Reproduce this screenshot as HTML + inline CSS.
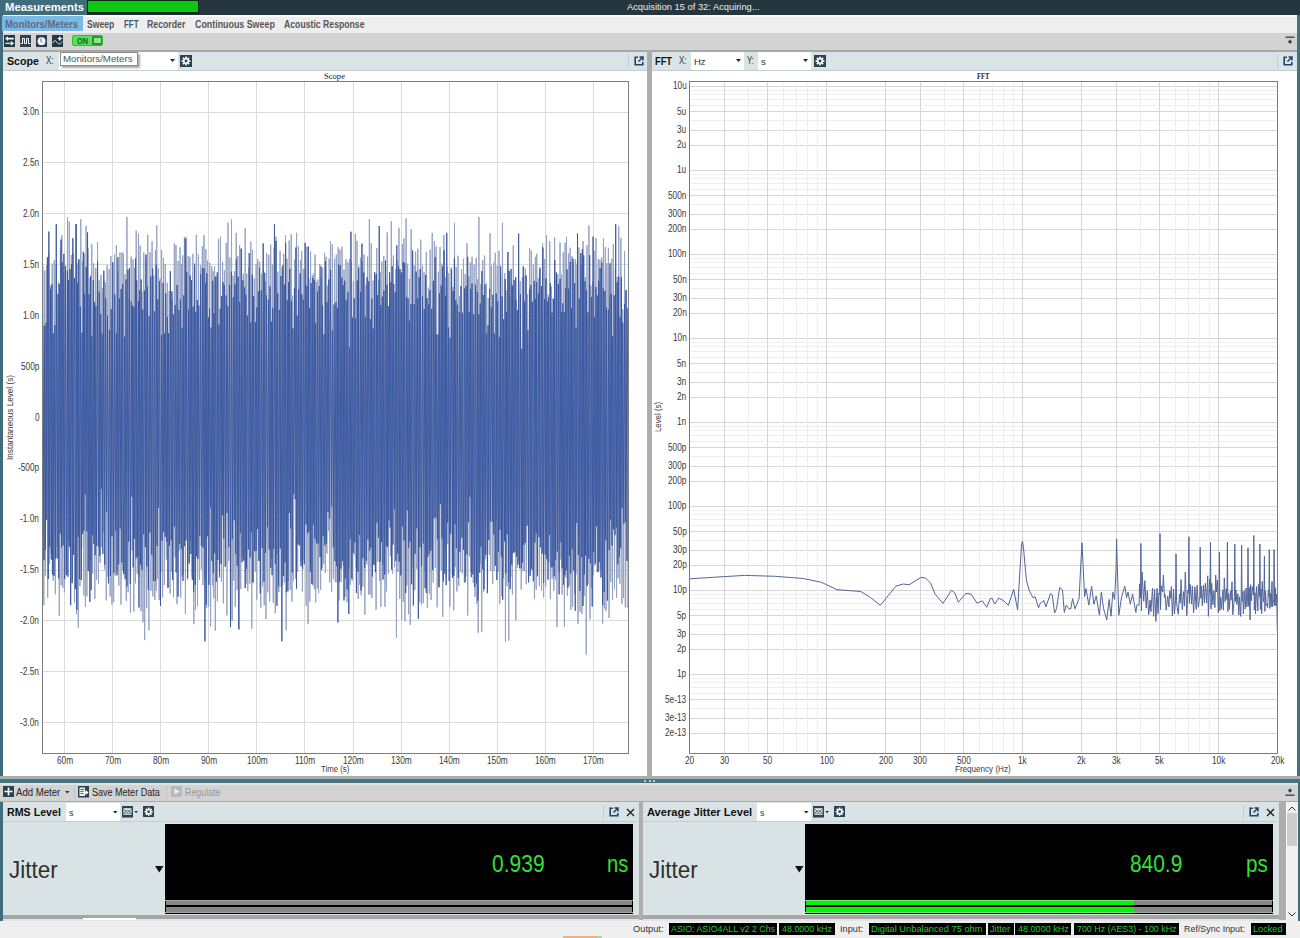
<!DOCTYPE html><html><head><meta charset="utf-8"><title>Measurements</title><style>
*{margin:0;padding:0;box-sizing:border-box}
html,body{width:1300px;height:938px;overflow:hidden;background:#efefef;font-family:"Liberation Sans",sans-serif;}
.a{position:absolute}
.t{position:absolute;white-space:nowrap;line-height:1}
</style></head><body>
<div class="a" style="left:0px;top:0px;width:1300px;height:15px;background:#25363f"></div>
<div class="a" style="left:0px;top:0px;width:87px;height:15px;background:#3f6d7b"></div>
<div class="t" style="left:5.00px;top:2.00px;font-size:11.5px;font-family:'Liberation Sans',sans-serif;font-weight:bold;color:#fff;transform:scaleX(0.9809);transform-origin:0 0;">Measurements</div>
<div class="a" style="left:87px;top:0px;width:112px;height:14px;background:#0b2a14"></div>
<div class="a" style="left:88px;top:1px;width:110px;height:11px;background:#0cc80f"></div>
<div class="t" style="left:627.00px;top:2.00px;font-size:9.5px;font-family:'Liberation Sans',sans-serif;font-weight:normal;color:#e8eef0;transform:scaleX(0.9801);transform-origin:0 0;">Acquisition 15 of 32: Acquiring...</div>
<div class="a" style="left:0px;top:15px;width:2.5px;height:906px;background:#3f6d7b"></div>
<div class="a" style="left:2.5px;top:15px;width:1px;height:906px;background:#8fa3a9"></div>
<div class="a" style="left:1297px;top:15px;width:3px;height:768px;background:#46717e"></div>
<div class="a" style="left:3px;top:15px;width:1294px;height:18px;background:#efeeee"></div>
<div class="a" style="left:3px;top:15px;width:1294px;height:1.5px;background:#fafafa"></div>
<div class="a" style="left:2px;top:15.5px;width:81px;height:15.5px;background:#7cb8e4"></div>
<div class="t" style="left:5.00px;top:20.00px;font-size:10.2px;font-family:'Liberation Sans',sans-serif;font-weight:bold;color:#5d6c7c;transform:scaleX(0.9267);transform-origin:0 0;">Monitors/Meters</div>
<div class="t" style="left:87.20px;top:20.00px;font-size:10.2px;font-family:'Liberation Sans',sans-serif;font-weight:bold;color:#555;transform:scaleX(0.8448);transform-origin:0 0;">Sweep</div>
<div class="t" style="left:123.90px;top:20.00px;font-size:10.2px;font-family:'Liberation Sans',sans-serif;font-weight:bold;color:#3f5d6d;transform:scaleX(0.7811);transform-origin:0 0;">FFT</div>
<div class="t" style="left:147.40px;top:20.00px;font-size:10.2px;font-family:'Liberation Sans',sans-serif;font-weight:bold;color:#555;transform:scaleX(0.8574);transform-origin:0 0;">Recorder</div>
<div class="t" style="left:194.80px;top:20.00px;font-size:10.2px;font-family:'Liberation Sans',sans-serif;font-weight:bold;color:#555;transform:scaleX(0.8703);transform-origin:0 0;">Continuous Sweep</div>
<div class="t" style="left:283.90px;top:20.00px;font-size:10.2px;font-family:'Liberation Sans',sans-serif;font-weight:bold;color:#555;transform:scaleX(0.8515);transform-origin:0 0;">Acoustic Response</div>
<div class="a" style="left:3px;top:33px;width:1294px;height:17px;background:#d3d3d3"></div>
<div class="a" style="left:3px;top:50px;width:1294px;height:2px;background:#a7a7a7"></div>
<svg class="a" style="left:4px;top:35px" width="11" height="12" viewBox="0 0 11 12"><rect width="11" height="12" fill="#1f3a44"/><path d="M1 3.6L4 1.2V6z" fill="#fff"/><rect x="3.6" y="2.8" width="6.2" height="1.7" fill="#fff"/><rect x="1.4" y="7.6" width="5.4" height="1.5" fill="#cfd8dc"/><path d="M10.2 8.35L6.8 6v4.7z" fill="#e8eef0"/></svg>
<svg class="a" style="left:20px;top:35px" width="11" height="12" viewBox="0 0 11 12"><rect width="11" height="12" fill="#2d4250"/><path d="M0.5 8.5H2.5V3.5H4.5V8.5H6.5V3.5H8.5V8.5H10.5" stroke="#fff" stroke-width="1" fill="none" stroke-linejoin="miter"/></svg>
<svg class="a" style="left:36px;top:35px" width="11" height="12" viewBox="0 0 11 12"><rect width="11" height="12" fill="#2d4250"/><circle cx="5.5" cy="6.2" r="3.9" fill="#fff"/><path d="M5.1 3.6v2.9l1.3 1.3" stroke="#2d4250" stroke-width="0.9" fill="none"/></svg>
<svg class="a" style="left:52px;top:35px" width="11" height="12" viewBox="0 0 11 12"><rect width="11" height="12" fill="#233844"/><path d="M0.8 8C2.2 5 3.4 5 5 7.3S7.8 9.8 10 6.6" stroke="#dfe8ec" stroke-width="1" fill="none"/><path d="M7.8 0.9L8.6 2.8 10.5 3.6 8.6 4.4 7.8 6.3 7 4.4 5.1 3.6 7 2.8z" fill="#fff"/></svg>
<div class="a" style="left:72px;top:35px;width:31px;height:11px;border-radius:2px;background:#55e055;border:1px solid #36b836"></div>
<div class="t" style="left:76.50px;top:37.00px;font-size:8.5px;font-family:'Liberation Sans',sans-serif;font-weight:bold;color:#1d5a2a;transform:scaleX(0.8627);transform-origin:0 0;">ON</div>
<div class="a" style="left:92px;top:36px;width:10px;height:9px;background:#2f922f;border-radius:1px"></div>
<div class="a" style="left:93.5px;top:38px;width:7px;height:5px;background:#8ee38e"></div>
<svg class="a" style="left:1285px;top:36px" width="10" height="9" viewBox="0 0 10 9"><path d="M0.5 1.2h9" stroke="#34495a" stroke-width="1.4"/><path d="M5 3.6L7.2 5.8 5 8 2.8 5.8z" fill="#34495a"/></svg>
<div class="a" style="left:3px;top:52px;width:644px;height:18px;background:#d9e4e7"></div>
<div class="a" style="left:3px;top:70px;width:644px;height:706px;background:#fff"></div>
<div class="a" style="left:3px;top:70px;width:644px;height:1px;background:#c3cdd0"></div>
<div class="a" style="left:652px;top:52px;width:645px;height:18px;background:#d9e4e7"></div>
<div class="a" style="left:652px;top:70px;width:645px;height:706px;background:#fff"></div>
<div class="a" style="left:652px;top:70px;width:645px;height:1px;background:#c3cdd0"></div>
<div class="a" style="left:647px;top:50px;width:5px;height:726px;background:#adadad"></div>
<div class="a" style="left:0px;top:776px;width:1300px;height:3px;background:#a9adae"></div>
<div class="a" style="left:0px;top:779px;width:1300px;height:4px;background:#46737f"></div>
<div class="a" style="left:644px;top:780px;width:2px;height:2px;background:#b8cdd4"></div>
<div class="a" style="left:649px;top:780px;width:2px;height:2px;background:#b8cdd4"></div>
<div class="a" style="left:653px;top:780px;width:2px;height:2px;background:#b8cdd4"></div>
<div class="t" style="left:6.50px;top:56.00px;font-size:11.5px;font-family:'Liberation Sans',sans-serif;font-weight:bold;color:#111;transform:scaleX(0.9272);transform-origin:0 0;">Scope</div>
<div class="t" style="left:45.50px;top:56.00px;font-size:10px;font-family:'Liberation Sans',sans-serif;font-weight:normal;color:#333;transform:scaleX(0.7938);transform-origin:0 0;">X:</div>
<div class="a" style="left:59px;top:52px;width:119px;height:18px;background:#fff"></div>
<svg class="a" style="left:170px;top:59px" width="6" height="4"><path d="M0 0h5l-2.5 3z" fill="#222"/></svg>
<svg class="a" style="left:180px;top:55px" width="12" height="12" viewBox="0 0 12 12"><rect width="12" height="12" fill="#2d4250"/><g fill="#fff"><circle cx="6" cy="6" r="3.0"/><rect x="5.15" y="1.6" width="1.7" height="1.8" transform="rotate(0 6 6)"/><rect x="5.15" y="1.6" width="1.7" height="1.8" transform="rotate(45 6 6)"/><rect x="5.15" y="1.6" width="1.7" height="1.8" transform="rotate(90 6 6)"/><rect x="5.15" y="1.6" width="1.7" height="1.8" transform="rotate(135 6 6)"/><rect x="5.15" y="1.6" width="1.7" height="1.8" transform="rotate(180 6 6)"/><rect x="5.15" y="1.6" width="1.7" height="1.8" transform="rotate(225 6 6)"/><rect x="5.15" y="1.6" width="1.7" height="1.8" transform="rotate(270 6 6)"/><rect x="5.15" y="1.6" width="1.7" height="1.8" transform="rotate(315 6 6)"/></g><circle cx="6" cy="6" r="1.45" fill="#2d4250"/></svg>
<div class="a" style="left:628px;top:54px;width:1px;height:14px;background:#c5cfd2"></div>
<svg class="a" style="left:634px;top:56px" width="10" height="10" viewBox="0 0 10 10"><path d="M4 1.2H1.2v7.6h7.6V6" stroke="#21426f" stroke-width="1.6" fill="none"/><path d="M4.5 5.5L8.5 1.5M5.5 1h3.5v3.5" stroke="#21426f" stroke-width="1.5" fill="none"/></svg>
<div class="a" style="left:60px;top:52px;width:78px;height:14px;background:#fff;border:1px solid #8a8a8a;box-shadow:2px 2px 2px rgba(0,0,0,0.35)"></div>
<div class="t" style="left:63.40px;top:54.00px;font-size:9.5px;font-family:'Liberation Sans',sans-serif;font-weight:normal;color:#555;transform:scaleX(1.0205);transform-origin:0 0;">Monitors/Meters</div>
<div class="t" style="left:655.00px;top:56.00px;font-size:11.5px;font-family:'Liberation Sans',sans-serif;font-weight:bold;color:#111;transform:scaleX(0.8067);transform-origin:0 0;">FFT</div>
<div class="t" style="left:678.50px;top:56.00px;font-size:10px;font-family:'Liberation Sans',sans-serif;font-weight:normal;color:#333;transform:scaleX(0.7938);transform-origin:0 0;">X:</div>
<div class="a" style="left:691px;top:52px;width:53px;height:18px;background:#fff"></div>
<div class="t" style="left:694.00px;top:57.00px;font-size:9.5px;font-family:'Liberation Sans',sans-serif;font-weight:normal;color:#333;">Hz</div>
<svg class="a" style="left:736px;top:59px" width="6" height="4"><path d="M0 0h5l-2.5 3z" fill="#222"/></svg>
<div class="t" style="left:747.00px;top:56.00px;font-size:10px;font-family:'Liberation Sans',sans-serif;font-weight:normal;color:#333;transform:scaleX(0.7868);transform-origin:0 0;">Y:</div>
<div class="a" style="left:758px;top:52px;width:53px;height:18px;background:#fff"></div>
<div class="t" style="left:761.00px;top:57.00px;font-size:9.5px;font-family:'Liberation Sans',sans-serif;font-weight:normal;color:#333;">s</div>
<svg class="a" style="left:803px;top:59px" width="6" height="4"><path d="M0 0h5l-2.5 3z" fill="#222"/></svg>
<svg class="a" style="left:814px;top:55px" width="12" height="12" viewBox="0 0 12 12"><rect width="12" height="12" fill="#2d4250"/><g fill="#fff"><circle cx="6" cy="6" r="3.0"/><rect x="5.15" y="1.6" width="1.7" height="1.8" transform="rotate(0 6 6)"/><rect x="5.15" y="1.6" width="1.7" height="1.8" transform="rotate(45 6 6)"/><rect x="5.15" y="1.6" width="1.7" height="1.8" transform="rotate(90 6 6)"/><rect x="5.15" y="1.6" width="1.7" height="1.8" transform="rotate(135 6 6)"/><rect x="5.15" y="1.6" width="1.7" height="1.8" transform="rotate(180 6 6)"/><rect x="5.15" y="1.6" width="1.7" height="1.8" transform="rotate(225 6 6)"/><rect x="5.15" y="1.6" width="1.7" height="1.8" transform="rotate(270 6 6)"/><rect x="5.15" y="1.6" width="1.7" height="1.8" transform="rotate(315 6 6)"/></g><circle cx="6" cy="6" r="1.45" fill="#2d4250"/></svg>
<div class="a" style="left:1277px;top:54px;width:1px;height:14px;background:#c5cfd2"></div>
<svg class="a" style="left:1283px;top:56px" width="10" height="10" viewBox="0 0 10 10"><path d="M4 1.2H1.2v7.6h7.6V6" stroke="#21426f" stroke-width="1.6" fill="none"/><path d="M4.5 5.5L8.5 1.5M5.5 1h3.5v3.5" stroke="#21426f" stroke-width="1.5" fill="none"/></svg>
<svg class="a" style="left:0;top:0" width="1300" height="938" viewBox="0 0 1300 938"><line x1="64.5" y1="81.5" x2="64.5" y2="753.5" stroke="#dadada" stroke-width="1"/><line x1="112.5" y1="81.5" x2="112.5" y2="753.5" stroke="#dadada" stroke-width="1"/><line x1="160.5" y1="81.5" x2="160.5" y2="753.5" stroke="#dadada" stroke-width="1"/><line x1="208.5" y1="81.5" x2="208.5" y2="753.5" stroke="#dadada" stroke-width="1"/><line x1="256.5" y1="81.5" x2="256.5" y2="753.5" stroke="#dadada" stroke-width="1"/><line x1="304.5" y1="81.5" x2="304.5" y2="753.5" stroke="#dadada" stroke-width="1"/><line x1="353.5" y1="81.5" x2="353.5" y2="753.5" stroke="#dadada" stroke-width="1"/><line x1="401.5" y1="81.5" x2="401.5" y2="753.5" stroke="#dadada" stroke-width="1"/><line x1="449.5" y1="81.5" x2="449.5" y2="753.5" stroke="#dadada" stroke-width="1"/><line x1="497.5" y1="81.5" x2="497.5" y2="753.5" stroke="#dadada" stroke-width="1"/><line x1="545.5" y1="81.5" x2="545.5" y2="753.5" stroke="#dadada" stroke-width="1"/><line x1="593.5" y1="81.5" x2="593.5" y2="753.5" stroke="#dadada" stroke-width="1"/><line x1="42.5" y1="722.5" x2="628.5" y2="722.5" stroke="#dadada" stroke-width="1"/><line x1="42.5" y1="671.5" x2="628.5" y2="671.5" stroke="#dadada" stroke-width="1"/><line x1="42.5" y1="620.5" x2="628.5" y2="620.5" stroke="#dadada" stroke-width="1"/><line x1="42.5" y1="570.5" x2="628.5" y2="570.5" stroke="#dadada" stroke-width="1"/><line x1="42.5" y1="519.5" x2="628.5" y2="519.5" stroke="#dadada" stroke-width="1"/><line x1="42.5" y1="468.5" x2="628.5" y2="468.5" stroke="#dadada" stroke-width="1"/><line x1="42.5" y1="417.5" x2="628.5" y2="417.5" stroke="#dadada" stroke-width="1"/><line x1="42.5" y1="366.5" x2="628.5" y2="366.5" stroke="#dadada" stroke-width="1"/><line x1="42.5" y1="315.5" x2="628.5" y2="315.5" stroke="#dadada" stroke-width="1"/><line x1="42.5" y1="264.5" x2="628.5" y2="264.5" stroke="#dadada" stroke-width="1"/><line x1="42.5" y1="213.5" x2="628.5" y2="213.5" stroke="#dadada" stroke-width="1"/><line x1="42.5" y1="162.5" x2="628.5" y2="162.5" stroke="#dadada" stroke-width="1"/><line x1="42.5" y1="112.5" x2="628.5" y2="112.5" stroke="#dadada" stroke-width="1"/><polyline fill="none" stroke="#96a2c2" stroke-opacity="1.0" stroke-width="1" points="43.00,265.8 43.82,605.0 44.78,270.6 45.39,575.6 46.49,265.5 47.69,597.9 48.57,252.7 49.56,564.0 50.25,285.8 51.16,553.9 52.21,263.5 53.26,580.6 54.22,260.3 55.34,594.2 56.22,264.7 57.25,547.0 58.40,282.3 59.27,615.7 60.43,249.1 61.11,585.4 61.84,235.2 62.82,587.7 63.60,272.9 64.41,592.3 65.36,289.1 66.37,569.8 67.53,217.1 68.53,541.3 69.23,221.2 70.37,551.1 71.31,255.0 72.41,580.9 73.35,253.3 74.47,602.7 75.66,224.6 76.51,614.1 77.20,263.3 78.32,627.8 78.95,260.1 79.98,586.3 80.78,219.1 81.68,548.2 82.88,261.3 83.84,595.6 84.46,253.7 85.42,606.9 86.12,225.9 86.91,596.4 88.08,248.5 88.96,571.7 89.87,277.9 90.80,561.3 91.78,244.2 92.64,573.5 93.67,263.4 94.85,598.9 95.77,267.9 96.62,579.9 97.56,242.1 98.54,583.5 99.18,280.2 100.19,563.0 101.00,274.9 101.61,546.9 102.25,287.7 103.00,532.0 103.87,280.3 104.69,569.5 105.48,282.6 106.26,600.3 107.08,265.1 108.03,576.6 109.07,269.1 110.15,596.4 110.89,256.1 111.91,604.5 112.57,269.4 113.67,602.0 114.54,254.5 115.34,576.0 116.33,245.2 117.06,571.9 117.74,270.9 118.82,585.5 119.92,252.6 121.01,604.5 121.99,252.2 122.67,570.6 123.45,253.7 124.25,573.1 125.10,273.9 126.26,600.9 126.95,216.9 128.08,592.2 129.27,297.9 130.43,612.7 131.16,256.7 132.16,550.3 133.07,259.4 133.80,611.7 134.45,267.9 135.53,583.3 136.16,230.5 137.31,574.1 138.45,233.6 139.06,576.9 140.11,245.6 141.10,611.1 142.02,291.1 142.99,622.3 143.79,252.6 144.68,640.1 145.75,259.1 146.67,608.3 147.76,234.7 148.91,630.5 149.99,252.0 150.97,590.9 152.09,241.2 152.85,596.4 153.77,275.7 154.83,600.0 155.43,250.0 156.11,590.9 156.75,225.3 157.40,579.1 158.30,268.4 159.11,600.1 160.10,278.5 160.82,571.5 161.61,249.9 162.64,597.5 163.47,257.8 164.29,585.0 165.26,264.0 166.34,559.5 167.31,282.7 168.21,586.9 169.23,290.9 170.11,593.6 170.85,293.6 171.50,571.7 172.35,299.4 173.51,597.2 174.34,243.3 175.10,557.2 175.98,245.2 176.97,604.2 178.10,261.0 179.15,550.6 180.08,247.4 180.69,597.6 181.37,263.9 182.03,576.4 182.69,255.3 183.30,574.9 184.41,236.8 185.41,614.1 186.51,236.9 187.59,580.0 188.21,255.8 189.24,564.3 189.91,256.8 190.54,540.5 191.34,287.5 192.08,576.7 192.79,253.8 193.84,624.2 194.68,266.6 195.49,609.9 196.34,234.7 197.52,606.2 198.37,254.4 199.39,580.0 200.44,264.9 201.33,569.3 202.32,246.1 202.97,585.1 204.02,235.2 204.89,579.2 205.92,249.3 206.64,608.0 207.59,260.6 208.60,606.9 209.78,262.7 210.62,626.4 211.74,266.2 212.47,585.6 213.08,271.2 213.78,598.0 214.60,266.3 215.29,630.6 216.48,276.7 217.36,601.0 218.46,239.3 219.35,572.2 220.38,236.8 221.42,581.3 222.60,261.7 223.34,603.4 224.37,270.4 225.48,548.2 226.23,243.0 226.94,615.4 227.97,222.7 228.72,560.8 229.84,257.4 230.87,619.8 231.53,219.4 232.30,621.0 233.12,275.7 233.72,580.8 234.52,271.1 235.25,606.8 236.20,232.8 237.12,590.0 237.80,256.0 238.46,628.2 239.60,245.2 240.76,589.0 241.58,249.0 242.36,556.8 243.37,273.7 244.13,559.8 245.18,228.2 246.10,583.6 246.77,273.5 247.80,591.2 248.81,267.9 249.79,583.8 250.77,241.6 251.77,628.7 252.44,249.9 253.24,582.7 254.27,278.5 255.26,571.8 256.13,264.0 256.78,599.5 257.81,259.1 258.85,560.5 259.66,261.7 260.79,607.6 261.41,273.7 262.47,586.3 263.29,269.4 264.21,605.2 265.27,281.5 265.94,619.1 266.70,253.3 267.77,592.3 268.81,254.8 269.66,601.4 270.70,244.6 271.66,558.4 272.35,264.6 273.26,602.6 274.20,247.9 275.27,613.1 275.89,236.6 277.06,554.2 277.89,271.8 278.87,592.2 280.06,250.8 281.17,587.2 282.06,267.8 282.67,584.9 283.73,253.7 284.64,582.4 285.52,235.2 286.14,630.3 287.04,258.8 287.98,581.1 289.16,240.5 290.23,589.9 291.21,234.3 291.95,601.6 292.59,295.7 293.39,580.7 294.51,259.4 295.62,578.7 296.58,232.8 297.63,571.8 298.43,246.2 299.55,540.0 300.41,260.4 301.08,561.2 301.70,251.0 302.40,591.6 303.30,268.9 304.15,559.9 305.14,269.1 306.20,606.0 307.04,246.7 308.07,623.9 308.89,278.3 309.85,601.6 310.58,251.5 311.65,582.9 312.34,275.4 313.06,585.7 313.76,273.2 314.38,589.2 315.05,254.5 315.68,602.6 316.30,281.9 317.32,588.3 317.95,279.6 318.57,593.1 319.74,263.9 320.63,589.9 321.33,277.3 322.00,567.6 322.63,267.8 323.71,564.2 324.59,252.8 325.34,573.0 326.10,256.8 326.90,553.5 327.56,285.6 328.51,531.1 329.12,258.7 329.82,582.4 330.44,241.2 331.58,591.8 332.30,244.4 333.38,579.2 334.53,258.6 335.32,582.2 336.28,254.7 337.06,582.4 338.17,247.3 338.97,600.4 339.97,249.6 341.02,582.1 342.06,246.6 343.21,565.7 344.03,269.4 345.10,597.1 345.99,259.3 347.02,602.2 347.98,262.3 348.87,568.6 349.57,258.8 350.45,584.8 351.50,261.4 352.24,580.6 353.35,281.4 354.47,555.0 355.34,233.8 356.14,568.3 356.97,240.9 358.14,598.9 358.80,265.9 359.45,584.8 360.44,257.8 361.13,595.4 362.12,261.0 362.86,586.6 364.04,254.6 364.89,614.6 365.96,284.9 366.88,564.4 367.59,256.6 368.69,594.5 369.35,219.0 370.07,594.7 371.21,243.3 371.94,598.1 373.04,280.5 374.10,565.8 375.22,274.8 376.09,609.8 376.76,248.2 377.84,562.0 378.57,280.0 379.60,580.9 380.25,272.0 380.89,606.9 381.83,261.7 382.81,565.0 383.78,255.9 384.98,606.7 385.78,266.3 386.51,591.4 387.21,232.5 388.33,573.5 389.52,291.1 390.45,556.3 391.30,221.1 392.47,573.8 393.36,255.5 394.55,567.3 395.71,269.1 396.42,637.7 397.08,260.3 397.99,571.9 398.97,227.8 399.74,598.9 400.60,274.2 401.64,619.7 402.42,244.3 403.26,601.6 403.91,238.5 404.93,621.1 406.12,218.3 406.94,585.6 407.64,263.7 408.55,614.1 409.48,278.7 410.25,625.0 411.13,229.3 411.90,566.5 412.65,253.8 413.33,589.8 414.25,265.5 414.88,590.1 415.60,251.5 416.79,569.0 417.86,248.7 418.57,593.0 419.18,269.1 419.81,602.3 420.74,239.6 421.48,605.0 422.57,265.7 423.19,603.2 424.05,272.4 425.20,571.2 426.28,251.9 427.34,607.6 428.41,287.7 429.34,593.7 430.11,249.6 431.10,600.0 432.23,233.0 433.23,582.7 434.39,241.2 435.24,567.9 436.15,246.4 437.16,607.3 438.36,271.7 439.17,587.4 440.04,247.0 441.22,570.3 441.91,263.6 442.76,616.7 443.87,235.1 444.83,546.9 445.45,277.1 446.34,578.4 447.11,267.1 447.77,544.1 448.77,273.2 449.91,606.6 451.09,267.5 452.24,574.8 452.95,286.9 453.74,610.3 454.50,222.9 455.29,567.2 456.13,266.8 456.88,591.5 458.07,255.7 458.79,585.9 459.43,296.1 460.54,571.7 461.52,269.3 462.28,573.5 463.46,258.8 464.35,582.9 465.11,274.0 465.85,576.4 467.03,243.4 467.73,615.5 468.93,276.0 469.62,556.5 470.25,262.2 470.96,571.8 472.06,256.7 473.23,582.9 474.15,264.7 474.99,596.8 476.18,257.7 476.87,603.7 477.54,279.3 478.19,632.7 478.90,216.9 480.09,564.0 480.84,284.3 481.73,631.6 482.75,259.9 483.56,591.8 484.61,255.6 485.49,558.9 486.41,282.9 487.51,592.5 488.23,298.1 489.34,554.8 490.05,233.2 490.75,571.0 491.51,265.6 492.69,584.1 493.54,262.6 494.15,571.1 495.27,252.8 496.28,519.3 497.20,265.5 498.12,571.8 498.99,250.8 499.78,603.9 500.68,275.1 501.50,595.8 502.46,222.6 503.58,578.2 504.68,273.1 505.44,641.5 506.11,290.3 506.92,586.2 507.90,269.5 508.78,640.6 509.66,297.0 510.86,576.7 511.77,285.4 512.41,594.5 513.27,245.4 513.90,553.7 515.02,301.4 515.84,620.4 516.57,299.9 517.43,568.0 518.55,270.4 519.33,560.8 520.23,280.9 521.22,589.7 522.35,277.1 523.08,571.4 523.90,275.6 524.55,570.9 525.34,268.4 526.26,584.3 527.42,294.0 528.51,574.0 529.62,248.3 530.63,571.2 531.30,250.7 532.18,570.1 533.32,264.6 534.41,598.9 535.37,256.8 536.18,589.6 536.79,253.7 537.55,576.2 538.38,278.2 539.36,586.2 540.36,267.1 541.55,590.7 542.56,243.4 543.61,597.5 544.81,258.9 545.69,586.5 546.55,235.3 547.35,560.5 548.20,294.6 548.92,562.5 549.75,241.3 550.37,599.1 551.53,286.6 552.18,578.7 552.92,298.4 553.85,590.8 554.62,237.5 555.53,580.2 556.25,274.2 556.93,627.1 557.85,274.2 558.91,571.9 560.06,242.4 560.78,559.4 561.42,274.5 562.14,594.5 563.26,252.2 564.42,627.0 565.09,242.7 565.82,577.7 566.53,236.8 567.36,595.6 568.47,253.3 569.31,585.6 570.15,247.7 570.91,609.7 571.92,256.4 572.65,606.6 573.52,262.4 574.54,593.6 575.27,259.4 575.97,574.7 577.02,263.5 577.98,623.9 578.96,247.5 580.03,611.9 581.15,265.0 581.91,614.0 583.05,241.0 584.14,596.0 585.33,277.2 586.22,654.5 586.93,245.2 587.97,584.3 588.92,225.5 590.03,619.3 590.91,285.6 591.78,587.6 592.68,281.6 593.40,575.2 594.06,251.0 594.84,565.6 595.97,238.3 597.17,571.6 598.27,259.1 598.87,570.6 599.88,259.8 600.77,569.4 601.71,257.4 602.65,623.5 603.48,238.5 604.27,608.4 605.30,247.2 606.02,610.9 606.87,263.1 607.50,587.5 608.39,247.9 609.09,617.9 609.75,295.5 610.87,582.2 611.78,258.8 612.55,599.6 613.33,244.1 614.50,589.2 615.39,268.5 616.57,597.7 617.28,277.0 618.00,578.2 618.73,226.3 619.77,583.9 620.91,237.9 621.96,603.8 622.70,309.2 623.50,598.1 624.55,251.3 625.31,607.3 626.22,290.8 627.27,608.3"/><polyline fill="none" stroke="#3957a0" stroke-opacity="0.92" stroke-width="1" points="43.00,324.5 43.97,560.2 44.73,326.1 45.36,550.0 46.14,322.8 46.73,519.7 47.42,257.3 48.28,578.9 48.85,231.6 49.69,547.1 50.52,289.3 51.31,559.5 51.88,284.2 52.45,574.6 53.21,333.4 53.99,576.0 54.83,325.0 55.58,558.6 56.26,224.1 57.19,558.4 58.06,294.1 58.74,578.3 59.32,284.1 60.25,533.6 60.97,239.6 61.52,547.5 62.17,262.2 63.16,545.2 63.89,253.9 64.79,579.0 65.46,265.9 66.44,575.2 67.33,270.8 67.93,576.7 68.51,279.9 69.31,546.7 70.06,269.1 70.67,605.1 71.51,264.0 72.15,583.2 72.83,238.2 73.51,554.8 74.46,278.1 75.39,589.2 76.23,224.1 76.88,609.9 77.55,282.9 78.23,536.9 78.81,259.1 79.47,579.1 80.29,306.5 81.27,580.0 82.04,332.6 82.67,534.0 83.29,251.7 83.96,530.7 84.59,294.0 85.23,494.3 86.21,266.9 86.95,531.4 87.54,232.4 88.20,570.5 89.07,294.4 89.89,601.8 90.57,275.9 91.15,590.0 91.80,336.4 92.63,534.8 93.30,280.0 93.86,544.0 94.53,302.0 95.16,555.1 95.88,305.8 96.59,545.7 97.54,261.3 98.40,546.5 99.22,291.7 99.77,555.7 100.73,314.1 101.29,488.9 102.13,333.6 102.82,554.0 103.82,270.7 104.70,564.7 105.66,298.5 106.57,512.1 107.53,315.9 108.48,583.4 109.43,329.9 110.36,575.9 111.17,309.3 111.98,536.3 112.81,262.2 113.81,573.1 114.75,294.4 115.63,530.5 116.44,333.3 117.03,575.2 117.92,257.2 118.68,564.2 119.34,298.4 120.16,528.5 121.13,289.0 121.81,562.3 122.67,284.2 123.63,574.2 124.47,336.7 125.17,579.1 126.02,279.6 126.93,586.4 127.90,269.7 128.71,541.8 129.40,268.1 130.33,584.0 131.26,301.5 131.93,496.5 132.56,305.6 133.21,567.5 133.94,306.7 134.63,538.8 135.56,258.5 136.15,558.3 136.71,280.4 137.58,556.4 138.38,301.3 138.94,607.5 139.55,290.3 140.48,564.5 141.13,279.5 141.97,569.8 142.72,309.5 143.63,534.3 144.61,290.5 145.38,547.2 146.01,254.5 146.88,566.6 147.51,286.3 148.37,589.7 149.16,316.0 149.88,532.6 150.79,276.4 151.76,554.7 152.64,268.3 153.47,580.9 154.43,311.3 155.37,581.5 156.28,264.8 157.12,545.9 157.77,299.3 158.61,507.5 159.48,281.4 160.47,605.8 161.46,335.0 162.15,540.7 163.11,283.0 163.70,531.9 164.45,333.7 165.22,536.8 165.78,293.2 166.69,541.6 167.32,317.0 167.93,587.9 168.55,333.1 169.48,545.8 170.34,271.1 171.31,540.2 171.90,291.4 172.58,579.9 173.46,314.5 174.39,526.5 175.19,305.1 176.12,572.3 177.08,285.0 178.06,596.7 178.85,309.9 179.64,543.6 180.42,299.2 181.40,548.8 182.19,327.8 182.99,580.9 183.76,295.4 184.55,546.2 185.29,238.5 185.96,540.5 186.72,271.9 187.64,578.0 188.60,309.7 189.23,562.5 190.06,275.7 190.96,554.1 191.52,280.1 192.38,580.1 193.07,306.7 193.67,592.2 194.55,263.7 195.21,584.8 195.85,311.8 196.57,556.4 197.31,300.1 197.95,558.9 198.78,305.5 199.72,536.1 200.54,274.4 201.43,546.0 202.34,268.1 203.03,547.7 204.00,268.3 204.95,641.3 205.56,283.5 206.22,604.5 206.82,273.4 207.72,536.3 208.33,317.4 208.89,584.9 209.53,308.6 210.51,507.3 211.12,327.6 211.89,560.9 212.75,280.9 213.35,573.0 213.91,313.0 214.72,553.2 215.34,276.6 216.26,581.7 217.26,272.4 217.84,559.7 218.82,324.7 219.51,577.2 220.27,308.8 221.09,563.8 221.65,296.1 222.28,515.3 223.04,282.1 223.67,538.6 224.30,285.2 225.25,566.6 226.16,295.5 226.99,513.0 227.73,306.2 228.72,546.7 229.63,284.7 230.52,627.2 231.42,271.7 232.37,539.2 233.31,297.4 234.21,520.3 234.94,284.5 235.65,554.1 236.41,259.3 237.24,565.9 238.07,276.7 238.92,629.5 239.63,301.9 240.42,532.9 241.14,248.6 242.01,562.2 242.90,280.2 243.73,560.7 244.61,287.3 245.18,588.1 245.82,294.8 246.48,568.8 247.44,315.5 248.43,549.4 249.23,253.1 250.15,557.3 250.73,322.6 251.30,532.3 252.27,274.7 252.89,582.4 253.67,296.3 254.64,551.2 255.38,322.2 256.10,551.0 256.78,307.5 257.45,529.0 258.33,291.3 258.99,561.0 259.56,267.7 260.28,593.3 261.23,290.4 262.23,548.1 263.20,243.4 263.95,581.7 264.71,272.7 265.50,553.0 266.47,295.3 267.46,527.2 268.38,299.9 269.21,549.6 269.96,286.3 270.75,567.8 271.36,321.6 272.11,575.1 272.78,308.3 273.68,548.8 274.47,224.1 275.35,563.9 276.01,240.9 276.91,605.8 277.74,293.3 278.60,586.4 279.40,309.8 280.29,548.5 280.93,276.1 281.89,641.3 282.84,265.2 283.51,576.0 284.25,284.7 285.04,562.2 285.63,242.9 286.42,592.3 287.26,300.1 287.90,591.3 288.61,282.1 289.19,513.0 289.79,268.7 290.69,528.6 291.34,301.0 292.25,572.6 292.97,328.4 293.66,494.2 294.46,288.3 295.20,499.2 295.92,247.5 296.50,588.7 297.09,315.6 297.95,544.3 298.63,289.4 299.28,545.5 300.13,273.4 301.00,566.2 301.87,294.3 302.58,569.1 303.45,299.9 304.32,564.3 305.13,242.9 306.09,524.4 306.84,285.9 307.53,533.3 308.26,246.6 308.92,532.0 309.63,308.0 310.36,571.6 311.09,283.0 312.00,584.1 312.79,278.0 313.42,524.7 314.31,279.9 314.87,538.5 315.65,323.3 316.64,543.3 317.48,291.5 318.28,543.4 319.18,286.2 320.06,557.1 321.02,266.3 321.63,569.8 322.52,305.4 323.17,536.1 324.06,334.4 324.79,545.3 325.49,261.4 326.26,543.5 327.05,302.2 328.02,511.9 328.75,279.5 329.68,518.3 330.60,269.9 331.58,506.4 332.42,330.3 333.33,547.4 334.07,304.6 334.95,561.2 335.95,302.2 336.59,566.2 337.33,307.9 337.91,622.4 338.60,264.5 339.49,581.6 340.13,265.1 340.94,568.5 341.90,277.7 342.53,561.1 343.18,285.1 344.00,600.5 344.65,280.7 345.27,578.3 346.17,300.3 347.08,589.5 347.85,291.9 348.81,614.0 349.51,347.4 350.28,539.0 350.93,231.7 351.84,578.5 352.56,317.6 353.24,553.1 354.23,298.3 354.79,542.3 355.55,318.7 356.42,593.0 357.25,280.5 357.94,571.7 358.61,268.3 359.44,535.0 360.44,291.9 361.06,590.7 361.95,243.7 362.89,558.2 363.81,272.6 364.68,567.7 365.27,316.9 366.25,560.7 367.07,277.2 367.97,539.3 368.71,281.2 369.63,550.6 370.27,319.1 370.89,547.5 371.82,298.8 372.40,576.6 373.09,328.5 373.80,564.2 374.66,272.0 375.42,572.1 376.40,273.9 376.96,522.7 377.68,295.1 378.48,537.6 379.24,226.0 380.15,561.8 380.79,305.3 381.51,542.2 382.31,296.7 383.03,579.6 383.88,290.6 384.76,574.6 385.46,260.4 386.33,545.8 387.03,284.7 387.65,547.1 388.24,306.3 388.87,520.3 389.60,272.4 390.19,527.5 390.84,282.2 391.58,569.3 392.16,266.3 392.94,544.7 393.78,284.0 394.51,509.4 395.20,292.3 395.93,561.0 396.80,245.3 397.65,553.5 398.47,266.3 399.17,561.8 400.02,269.1 400.80,575.4 401.70,272.3 402.32,526.7 403.22,262.0 403.93,540.4 404.70,262.7 405.70,593.1 406.48,297.2 407.12,510.3 408.09,298.3 408.68,547.7 409.34,320.7 410.04,541.5 411.01,304.2 411.61,584.2 412.60,250.4 413.39,605.6 414.20,304.0 415.16,553.8 416.15,271.5 416.76,528.3 417.68,298.1 418.34,618.8 419.14,277.2 419.94,547.2 420.53,269.2 421.52,566.3 422.49,296.3 423.34,543.4 424.23,309.2 425.14,588.4 425.70,275.1 426.31,593.0 427.03,298.0 427.82,556.7 428.49,304.4 429.32,553.8 429.89,290.1 430.87,550.8 431.69,308.9 432.52,570.0 433.38,280.8 434.15,518.2 435.15,257.2 435.88,517.6 436.63,334.5 437.42,539.1 438.20,334.5 438.90,587.0 439.47,293.3 440.35,504.2 441.17,285.4 441.99,538.3 442.57,266.8 443.34,581.6 444.07,250.3 444.86,573.6 445.52,295.7 446.17,585.1 446.75,232.8 447.60,522.5 448.54,327.5 449.19,580.9 450.08,337.6 450.67,533.7 451.58,269.4 452.56,578.0 453.11,291.1 453.81,576.0 454.38,258.4 455.11,524.4 455.82,300.2 456.39,548.1 457.34,304.9 458.31,578.0 459.30,312.1 459.98,551.9 460.95,286.0 461.88,537.7 462.59,312.8 463.53,549.7 464.53,288.5 465.17,582.2 466.11,286.2 466.99,554.4 467.68,256.9 468.55,522.3 469.16,312.1 469.91,496.7 470.50,288.9 471.37,577.2 472.00,283.5 472.85,574.3 473.76,314.2 474.71,587.0 475.52,284.8 476.49,583.3 477.34,291.8 477.93,600.6 478.92,314.5 479.71,572.9 480.28,303.5 480.95,546.8 481.86,271.1 482.75,569.3 483.41,295.1 484.04,589.4 484.99,284.6 485.75,554.8 486.64,333.3 487.42,593.1 488.05,325.3 488.76,540.0 489.60,288.8 490.38,521.4 491.31,307.3 492.29,521.9 492.92,294.8 493.74,534.6 494.40,333.6 495.30,565.8 496.21,293.5 496.86,579.9 497.67,301.4 498.49,551.8 499.36,337.1 499.99,529.7 500.61,266.3 501.35,556.6 502.10,296.4 502.69,599.8 503.64,319.3 504.55,541.3 505.21,279.0 505.78,573.4 506.47,312.2 507.14,534.2 507.95,252.0 508.58,582.1 509.24,271.0 510.17,589.2 511.07,268.9 511.79,564.6 512.43,285.5 513.20,552.5 514.10,280.1 514.85,551.7 515.74,277.1 516.69,556.6 517.30,310.2 518.04,564.5 518.63,233.6 519.52,568.3 520.40,294.2 521.20,568.4 521.86,348.8 522.57,562.5 523.27,266.4 523.84,545.0 524.57,301.5 525.28,542.9 526.14,275.5 527.09,525.7 527.85,330.0 528.57,582.4 529.47,289.3 530.10,576.0 530.90,285.0 531.54,568.7 532.31,301.7 533.30,581.2 534.16,280.8 534.88,542.5 535.46,298.9 536.14,533.4 536.69,282.1 537.42,576.2 538.39,293.5 539.10,537.1 539.72,268.5 540.61,547.4 541.49,286.1 542.18,553.5 542.91,247.4 543.60,583.0 544.50,299.1 545.23,554.4 545.88,278.3 546.70,558.7 547.27,301.5 548.06,579.6 548.67,297.4 549.55,534.8 550.40,283.2 551.08,567.4 551.95,312.7 552.89,567.1 553.54,299.1 554.18,576.2 554.75,260.0 555.56,559.6 556.47,272.5 557.32,551.4 558.29,283.9 559.14,594.4 560.12,279.0 560.95,542.2 561.54,312.1 562.12,568.2 562.84,303.3 563.52,584.6 564.14,312.1 564.76,575.1 565.61,288.2 566.32,570.2 567.06,269.3 567.92,587.8 568.72,288.7 569.45,555.5 570.16,261.8 570.74,573.5 571.51,308.3 572.21,548.6 572.87,258.6 573.82,570.6 574.63,283.0 575.26,610.8 576.02,327.7 576.73,523.0 577.54,233.5 578.37,554.9 579.20,298.5 579.88,590.9 580.80,253.1 581.76,556.8 582.33,249.1 583.02,605.9 583.73,255.4 584.37,574.3 585.02,281.3 585.57,555.4 586.36,290.3 587.14,586.2 587.98,312.4 588.78,558.5 589.70,255.4 590.41,563.2 591.36,296.9 592.22,606.5 593.08,236.6 593.70,552.0 594.53,317.4 595.25,563.5 595.93,287.0 596.58,526.4 597.25,295.5 598.03,572.3 598.63,280.8 599.23,561.8 600.10,268.3 601.00,577.6 601.76,262.4 602.70,605.0 603.28,288.4 604.19,591.8 604.91,291.1 605.78,540.4 606.48,307.7 607.41,600.5 608.33,309.8 609.20,550.0 610.03,263.3 610.64,519.4 611.36,293.8 611.99,545.4 612.55,336.2 613.53,529.3 614.14,295.3 614.98,535.2 615.71,224.1 616.28,527.4 617.15,282.4 617.83,564.1 618.71,276.7 619.41,556.8 619.97,317.0 620.69,548.2 621.37,277.0 622.05,507.9 622.78,322.4 623.77,523.9 624.50,304.1 625.41,522.0 626.02,290.1 626.99,561.0 627.65,308.2"/><rect x="42.5" y="81.5" width="586.0" height="672.0" fill="none" stroke="#7d7d7d" stroke-width="1"/><line x1="689.5" y1="733.5" x2="1277.5" y2="733.5" stroke="#d6d6d6" stroke-width="1"/><line x1="689.5" y1="718.5" x2="1277.5" y2="718.5" stroke="#d6d6d6" stroke-width="1"/><line x1="689.5" y1="708.5" x2="1277.5" y2="708.5" stroke="#eeeeee" stroke-width="1"/><line x1="689.5" y1="699.5" x2="1277.5" y2="699.5" stroke="#d6d6d6" stroke-width="1"/><line x1="689.5" y1="693.5" x2="1277.5" y2="693.5" stroke="#eeeeee" stroke-width="1"/><line x1="689.5" y1="687.5" x2="1277.5" y2="687.5" stroke="#eeeeee" stroke-width="1"/><line x1="689.5" y1="682.5" x2="1277.5" y2="682.5" stroke="#eeeeee" stroke-width="1"/><line x1="689.5" y1="678.5" x2="1277.5" y2="678.5" stroke="#eeeeee" stroke-width="1"/><line x1="689.5" y1="674.5" x2="1277.5" y2="674.5" stroke="#d6d6d6" stroke-width="1"/><line x1="689.5" y1="649.5" x2="1277.5" y2="649.5" stroke="#d6d6d6" stroke-width="1"/><line x1="689.5" y1="634.5" x2="1277.5" y2="634.5" stroke="#d6d6d6" stroke-width="1"/><line x1="689.5" y1="624.5" x2="1277.5" y2="624.5" stroke="#eeeeee" stroke-width="1"/><line x1="689.5" y1="615.5" x2="1277.5" y2="615.5" stroke="#d6d6d6" stroke-width="1"/><line x1="689.5" y1="609.5" x2="1277.5" y2="609.5" stroke="#eeeeee" stroke-width="1"/><line x1="689.5" y1="603.5" x2="1277.5" y2="603.5" stroke="#eeeeee" stroke-width="1"/><line x1="689.5" y1="598.5" x2="1277.5" y2="598.5" stroke="#eeeeee" stroke-width="1"/><line x1="689.5" y1="594.5" x2="1277.5" y2="594.5" stroke="#eeeeee" stroke-width="1"/><line x1="689.5" y1="590.5" x2="1277.5" y2="590.5" stroke="#d6d6d6" stroke-width="1"/><line x1="689.5" y1="565.5" x2="1277.5" y2="565.5" stroke="#d6d6d6" stroke-width="1"/><line x1="689.5" y1="550.5" x2="1277.5" y2="550.5" stroke="#d6d6d6" stroke-width="1"/><line x1="689.5" y1="540.5" x2="1277.5" y2="540.5" stroke="#eeeeee" stroke-width="1"/><line x1="689.5" y1="531.5" x2="1277.5" y2="531.5" stroke="#d6d6d6" stroke-width="1"/><line x1="689.5" y1="525.5" x2="1277.5" y2="525.5" stroke="#eeeeee" stroke-width="1"/><line x1="689.5" y1="519.5" x2="1277.5" y2="519.5" stroke="#eeeeee" stroke-width="1"/><line x1="689.5" y1="514.5" x2="1277.5" y2="514.5" stroke="#eeeeee" stroke-width="1"/><line x1="689.5" y1="510.5" x2="1277.5" y2="510.5" stroke="#eeeeee" stroke-width="1"/><line x1="689.5" y1="506.5" x2="1277.5" y2="506.5" stroke="#d6d6d6" stroke-width="1"/><line x1="689.5" y1="481.5" x2="1277.5" y2="481.5" stroke="#d6d6d6" stroke-width="1"/><line x1="689.5" y1="466.5" x2="1277.5" y2="466.5" stroke="#d6d6d6" stroke-width="1"/><line x1="689.5" y1="456.5" x2="1277.5" y2="456.5" stroke="#eeeeee" stroke-width="1"/><line x1="689.5" y1="447.5" x2="1277.5" y2="447.5" stroke="#d6d6d6" stroke-width="1"/><line x1="689.5" y1="441.5" x2="1277.5" y2="441.5" stroke="#eeeeee" stroke-width="1"/><line x1="689.5" y1="435.5" x2="1277.5" y2="435.5" stroke="#eeeeee" stroke-width="1"/><line x1="689.5" y1="430.5" x2="1277.5" y2="430.5" stroke="#eeeeee" stroke-width="1"/><line x1="689.5" y1="426.5" x2="1277.5" y2="426.5" stroke="#eeeeee" stroke-width="1"/><line x1="689.5" y1="422.5" x2="1277.5" y2="422.5" stroke="#d6d6d6" stroke-width="1"/><line x1="689.5" y1="397.5" x2="1277.5" y2="397.5" stroke="#d6d6d6" stroke-width="1"/><line x1="689.5" y1="382.5" x2="1277.5" y2="382.5" stroke="#d6d6d6" stroke-width="1"/><line x1="689.5" y1="372.5" x2="1277.5" y2="372.5" stroke="#eeeeee" stroke-width="1"/><line x1="689.5" y1="363.5" x2="1277.5" y2="363.5" stroke="#d6d6d6" stroke-width="1"/><line x1="689.5" y1="357.5" x2="1277.5" y2="357.5" stroke="#eeeeee" stroke-width="1"/><line x1="689.5" y1="351.5" x2="1277.5" y2="351.5" stroke="#eeeeee" stroke-width="1"/><line x1="689.5" y1="346.5" x2="1277.5" y2="346.5" stroke="#eeeeee" stroke-width="1"/><line x1="689.5" y1="342.5" x2="1277.5" y2="342.5" stroke="#eeeeee" stroke-width="1"/><line x1="689.5" y1="338.5" x2="1277.5" y2="338.5" stroke="#d6d6d6" stroke-width="1"/><line x1="689.5" y1="313.5" x2="1277.5" y2="313.5" stroke="#d6d6d6" stroke-width="1"/><line x1="689.5" y1="298.5" x2="1277.5" y2="298.5" stroke="#d6d6d6" stroke-width="1"/><line x1="689.5" y1="288.5" x2="1277.5" y2="288.5" stroke="#eeeeee" stroke-width="1"/><line x1="689.5" y1="279.5" x2="1277.5" y2="279.5" stroke="#d6d6d6" stroke-width="1"/><line x1="689.5" y1="273.5" x2="1277.5" y2="273.5" stroke="#eeeeee" stroke-width="1"/><line x1="689.5" y1="267.5" x2="1277.5" y2="267.5" stroke="#eeeeee" stroke-width="1"/><line x1="689.5" y1="262.5" x2="1277.5" y2="262.5" stroke="#eeeeee" stroke-width="1"/><line x1="689.5" y1="258.5" x2="1277.5" y2="258.5" stroke="#eeeeee" stroke-width="1"/><line x1="689.5" y1="254.5" x2="1277.5" y2="254.5" stroke="#d6d6d6" stroke-width="1"/><line x1="689.5" y1="229.5" x2="1277.5" y2="229.5" stroke="#d6d6d6" stroke-width="1"/><line x1="689.5" y1="214.5" x2="1277.5" y2="214.5" stroke="#d6d6d6" stroke-width="1"/><line x1="689.5" y1="204.5" x2="1277.5" y2="204.5" stroke="#eeeeee" stroke-width="1"/><line x1="689.5" y1="195.5" x2="1277.5" y2="195.5" stroke="#d6d6d6" stroke-width="1"/><line x1="689.5" y1="189.5" x2="1277.5" y2="189.5" stroke="#eeeeee" stroke-width="1"/><line x1="689.5" y1="183.5" x2="1277.5" y2="183.5" stroke="#eeeeee" stroke-width="1"/><line x1="689.5" y1="178.5" x2="1277.5" y2="178.5" stroke="#eeeeee" stroke-width="1"/><line x1="689.5" y1="174.5" x2="1277.5" y2="174.5" stroke="#eeeeee" stroke-width="1"/><line x1="689.5" y1="170.5" x2="1277.5" y2="170.5" stroke="#d6d6d6" stroke-width="1"/><line x1="689.5" y1="145.5" x2="1277.5" y2="145.5" stroke="#d6d6d6" stroke-width="1"/><line x1="689.5" y1="130.5" x2="1277.5" y2="130.5" stroke="#d6d6d6" stroke-width="1"/><line x1="689.5" y1="120.5" x2="1277.5" y2="120.5" stroke="#eeeeee" stroke-width="1"/><line x1="689.5" y1="111.5" x2="1277.5" y2="111.5" stroke="#d6d6d6" stroke-width="1"/><line x1="689.5" y1="105.5" x2="1277.5" y2="105.5" stroke="#eeeeee" stroke-width="1"/><line x1="689.5" y1="99.5" x2="1277.5" y2="99.5" stroke="#eeeeee" stroke-width="1"/><line x1="689.5" y1="94.5" x2="1277.5" y2="94.5" stroke="#eeeeee" stroke-width="1"/><line x1="689.5" y1="90.5" x2="1277.5" y2="90.5" stroke="#eeeeee" stroke-width="1"/><line x1="689.5" y1="86.5" x2="1277.5" y2="86.5" stroke="#d6d6d6" stroke-width="1"/><line x1="724.5" y1="81.5" x2="724.5" y2="753.5" stroke="#d6d6d6" stroke-width="1"/><line x1="748.5" y1="81.5" x2="748.5" y2="753.5" stroke="#eeeeee" stroke-width="1"/><line x1="767.5" y1="81.5" x2="767.5" y2="753.5" stroke="#d6d6d6" stroke-width="1"/><line x1="783.5" y1="81.5" x2="783.5" y2="753.5" stroke="#eeeeee" stroke-width="1"/><line x1="796.5" y1="81.5" x2="796.5" y2="753.5" stroke="#eeeeee" stroke-width="1"/><line x1="807.5" y1="81.5" x2="807.5" y2="753.5" stroke="#eeeeee" stroke-width="1"/><line x1="817.5" y1="81.5" x2="817.5" y2="753.5" stroke="#eeeeee" stroke-width="1"/><line x1="826.5" y1="81.5" x2="826.5" y2="753.5" stroke="#d6d6d6" stroke-width="1"/><line x1="885.5" y1="81.5" x2="885.5" y2="753.5" stroke="#d6d6d6" stroke-width="1"/><line x1="920.5" y1="81.5" x2="920.5" y2="753.5" stroke="#d6d6d6" stroke-width="1"/><line x1="944.5" y1="81.5" x2="944.5" y2="753.5" stroke="#eeeeee" stroke-width="1"/><line x1="963.5" y1="81.5" x2="963.5" y2="753.5" stroke="#d6d6d6" stroke-width="1"/><line x1="979.5" y1="81.5" x2="979.5" y2="753.5" stroke="#eeeeee" stroke-width="1"/><line x1="992.5" y1="81.5" x2="992.5" y2="753.5" stroke="#eeeeee" stroke-width="1"/><line x1="1003.5" y1="81.5" x2="1003.5" y2="753.5" stroke="#eeeeee" stroke-width="1"/><line x1="1013.5" y1="81.5" x2="1013.5" y2="753.5" stroke="#eeeeee" stroke-width="1"/><line x1="1022.5" y1="81.5" x2="1022.5" y2="753.5" stroke="#d6d6d6" stroke-width="1"/><line x1="1081.5" y1="81.5" x2="1081.5" y2="753.5" stroke="#d6d6d6" stroke-width="1"/><line x1="1116.5" y1="81.5" x2="1116.5" y2="753.5" stroke="#d6d6d6" stroke-width="1"/><line x1="1140.5" y1="81.5" x2="1140.5" y2="753.5" stroke="#eeeeee" stroke-width="1"/><line x1="1159.5" y1="81.5" x2="1159.5" y2="753.5" stroke="#d6d6d6" stroke-width="1"/><line x1="1175.5" y1="81.5" x2="1175.5" y2="753.5" stroke="#eeeeee" stroke-width="1"/><line x1="1188.5" y1="81.5" x2="1188.5" y2="753.5" stroke="#eeeeee" stroke-width="1"/><line x1="1199.5" y1="81.5" x2="1199.5" y2="753.5" stroke="#eeeeee" stroke-width="1"/><line x1="1209.5" y1="81.5" x2="1209.5" y2="753.5" stroke="#eeeeee" stroke-width="1"/><line x1="1218.5" y1="81.5" x2="1218.5" y2="753.5" stroke="#d6d6d6" stroke-width="1"/><polyline fill="none" stroke="#52669a" stroke-width="1" stroke-linejoin="round" points="689.6,578.8 724.6,576.6 744.6,575.4 775.4,576.3 803.0,578.5 821.5,582.3 837.0,589.7 860.8,591.5 870.5,597.5 880.3,605.3 896.0,586.1 903.2,584.0 909.0,584.8 920.8,577.5 925.4,577.9 930.6,583.1 935.2,594.2 943.0,603.4 951.5,590.3 954.8,592.9 958.3,602.3 965.9,593.3 971.2,594.2 977.0,603.1 982.3,600.8 986.8,607.3 990.1,598.8 992.1,598.2 994.7,604.0 998.6,598.2 1003.8,600.8 1008.4,605.3 1013.7,589.3 1017.6,610.0 1020.0,570.0 1021.5,545.0 1022.5,541.0 1023.5,548.0 1025.0,565.0 1026.5,581.0 1029.2,590.3 1032.9,597.7 1035.2,596.8 1038.5,607.9 1040.3,603.2 1044.0,600.5 1045.9,606.9 1050.5,593.5 1052.3,595.0 1054.6,613.0 1056.5,608.8 1059.7,587.5 1062.5,589.9 1064.3,612.5 1066.2,605.1 1068.9,608.8 1070.8,608.8 1072.6,598.6 1074.9,608.8 1079.1,598.6 1080.5,570.0 1082.0,542.7 1083.3,570.0 1084.6,596.8 1086.0,588.5 1088.8,605.1 1091.6,586.2 1093.9,604.2 1096.2,595.9 1099.4,615.2 1101.3,592.2 1103.6,608.8 1106.8,619.9 1109.1,599.5 1111.0,616.2 1112.8,592.2 1114.6,599.5 1116.0,570.0 1116.6,539.2 1117.4,570.0 1118.8,615.2 1121.6,596.8 1124.8,586.2 1126.6,597.7 1128.0,592.2 1130.3,604.2 1132.6,594.0 1135.9,612.5 1136.8,605.1 1139.1,605.1 1139.6,583.9 1140.5,597.9 1140.9,543.5 1141.4,610.9 1142.1,572.0 1143.7,601.3 1144.9,580.6 1146.2,608.1 1147.3,590.6 1148.7,614.8 1150.1,600.0 1150.9,611.8 1152.5,588.0 1153.6,616.3 1154.6,589.2 1155.9,621.4 1157.0,588.4 1158.0,613.7 1158.8,593.0 1159.6,594.5 1160.0,533.6 1160.5,609.5 1161.2,585.8 1162.6,591.9 1163.4,575.1 1164.4,597.4 1165.2,594.6 1166.2,610.1 1167.7,596.2 1168.9,607.0 1169.7,590.9 1170.5,598.3 1171.4,586.6 1172.4,615.9 1173.6,589.0 1174.4,613.8 1175.6,600.0 1176.0,553.9 1176.5,600.3 1177.2,607.8 1178.3,614.3 1179.5,594.1 1180.3,603.1 1181.0,579.6 1182.3,609.5 1183.5,591.7 1184.4,606.2 1185.3,572.0 1186.8,615.6 1187.9,590.1 1188.5,593.2 1188.9,536.7 1189.4,603.3 1190.1,584.2 1191.6,604.1 1192.3,585.9 1193.6,612.8 1194.9,586.8 1196.2,609.3 1197.1,585.3 1198.3,607.2 1199.8,596.6 1200.2,547.2 1200.7,598.2 1201.4,586.3 1202.3,605.8 1203.4,585.1 1204.4,602.9 1205.3,583.3 1206.6,602.8 1207.7,575.8 1208.4,616.3 1209.6,578.9 1210.1,593.4 1210.5,542.2 1211.0,608.9 1211.7,583.2 1212.8,604.7 1213.9,590.7 1214.9,607.6 1215.7,575.0 1216.5,591.9 1217.4,580.0 1218.3,612.6 1219.0,593.9 1219.4,552.0 1219.9,610.6 1220.6,597.1 1221.5,609.0 1222.8,589.9 1223.4,610.2 1224.3,577.8 1225.2,601.6 1226.3,588.7 1227.0,599.7 1227.4,542.2 1227.9,611.6 1228.6,593.4 1229.4,609.2 1230.5,590.8 1231.1,600.3 1232.0,581.8 1232.8,614.8 1234.4,596.8 1234.8,544.0 1235.3,601.6 1236.0,590.0 1236.9,604.5 1237.9,593.7 1238.8,615.0 1239.5,596.8 1240.7,616.4 1241.2,598.3 1241.6,545.3 1242.1,601.4 1242.8,591.6 1243.4,614.0 1244.3,590.6 1245.3,608.9 1246.1,588.0 1246.9,606.9 1247.6,598.0 1248.0,547.8 1248.5,606.3 1249.2,587.5 1250.1,619.9 1250.6,584.7 1251.4,600.6 1252.3,586.7 1253.4,595.1 1253.8,535.5 1254.3,609.9 1255.0,592.7 1255.5,613.7 1256.6,586.5 1257.8,611.0 1258.6,584.3 1259.5,596.7 1259.9,544.0 1260.4,609.4 1261.1,588.9 1261.7,613.5 1262.2,581.4 1263.4,601.9 1264.0,597.2 1264.4,556.4 1264.9,611.3 1265.6,590.9 1266.1,605.5 1267.1,603.9 1267.6,607.7 1268.4,589.8 1268.9,596.6 1269.3,549.6 1269.8,608.4 1270.5,593.3 1271.2,606.8 1272.0,581.4 1272.5,606.8 1273.7,599.3 1274.1,549.6 1274.6,605.8 1275.3,587.6 1275.9,605.8 1276.7,593.9 1277.3,630.5"/><rect x="689.5" y="81.5" width="588.0" height="672.0" fill="none" stroke="#7d7d7d" stroke-width="1"/></svg>
<div class="t" style="left:23.18px;top:107.00px;font-size:10.1px;font-family:'Liberation Sans',sans-serif;font-weight:normal;color:#3a3a3a;transform:scaleX(0.8200);transform-origin:0 0;">3.0n</div>
<div class="t" style="left:23.18px;top:158.00px;font-size:10.1px;font-family:'Liberation Sans',sans-serif;font-weight:normal;color:#3a3a3a;transform:scaleX(0.8200);transform-origin:0 0;">2.5n</div>
<div class="t" style="left:23.18px;top:209.00px;font-size:10.1px;font-family:'Liberation Sans',sans-serif;font-weight:normal;color:#3a3a3a;transform:scaleX(0.8200);transform-origin:0 0;">2.0n</div>
<div class="t" style="left:23.18px;top:260.00px;font-size:10.1px;font-family:'Liberation Sans',sans-serif;font-weight:normal;color:#3a3a3a;transform:scaleX(0.8200);transform-origin:0 0;">1.5n</div>
<div class="t" style="left:23.18px;top:311.00px;font-size:10.1px;font-family:'Liberation Sans',sans-serif;font-weight:normal;color:#3a3a3a;transform:scaleX(0.8200);transform-origin:0 0;">1.0n</div>
<div class="t" style="left:20.88px;top:362.00px;font-size:10.1px;font-family:'Liberation Sans',sans-serif;font-weight:normal;color:#3a3a3a;transform:scaleX(0.8200);transform-origin:0 0;">500p</div>
<div class="t" style="left:34.69px;top:413.00px;font-size:10.1px;font-family:'Liberation Sans',sans-serif;font-weight:normal;color:#3a3a3a;transform:scaleX(0.8200);transform-origin:0 0;">0</div>
<div class="t" style="left:18.12px;top:463.00px;font-size:10.1px;font-family:'Liberation Sans',sans-serif;font-weight:normal;color:#3a3a3a;transform:scaleX(0.8200);transform-origin:0 0;">-500p</div>
<div class="t" style="left:20.42px;top:514.00px;font-size:10.1px;font-family:'Liberation Sans',sans-serif;font-weight:normal;color:#3a3a3a;transform:scaleX(0.8200);transform-origin:0 0;">-1.0n</div>
<div class="t" style="left:20.42px;top:565.00px;font-size:10.1px;font-family:'Liberation Sans',sans-serif;font-weight:normal;color:#3a3a3a;transform:scaleX(0.8200);transform-origin:0 0;">-1.5n</div>
<div class="t" style="left:20.42px;top:616.00px;font-size:10.1px;font-family:'Liberation Sans',sans-serif;font-weight:normal;color:#3a3a3a;transform:scaleX(0.8200);transform-origin:0 0;">-2.0n</div>
<div class="t" style="left:20.42px;top:667.00px;font-size:10.1px;font-family:'Liberation Sans',sans-serif;font-weight:normal;color:#3a3a3a;transform:scaleX(0.8200);transform-origin:0 0;">-2.5n</div>
<div class="t" style="left:20.42px;top:718.00px;font-size:10.1px;font-family:'Liberation Sans',sans-serif;font-weight:normal;color:#3a3a3a;transform:scaleX(0.8200);transform-origin:0 0;">-3.0n</div>
<div class="t" style="left:56.64px;top:756.00px;font-size:10.1px;font-family:'Liberation Sans',sans-serif;font-weight:normal;color:#3a3a3a;transform:scaleX(0.8200);transform-origin:0 0;">60m</div>
<div class="t" style="left:104.73px;top:756.00px;font-size:10.1px;font-family:'Liberation Sans',sans-serif;font-weight:normal;color:#3a3a3a;transform:scaleX(0.8200);transform-origin:0 0;">70m</div>
<div class="t" style="left:152.82px;top:756.00px;font-size:10.1px;font-family:'Liberation Sans',sans-serif;font-weight:normal;color:#3a3a3a;transform:scaleX(0.8200);transform-origin:0 0;">80m</div>
<div class="t" style="left:200.91px;top:756.00px;font-size:10.1px;font-family:'Liberation Sans',sans-serif;font-weight:normal;color:#3a3a3a;transform:scaleX(0.8200);transform-origin:0 0;">90m</div>
<div class="t" style="left:246.70px;top:756.00px;font-size:10.1px;font-family:'Liberation Sans',sans-serif;font-weight:normal;color:#3a3a3a;transform:scaleX(0.8200);transform-origin:0 0;">100m</div>
<div class="t" style="left:295.10px;top:756.00px;font-size:10.1px;font-family:'Liberation Sans',sans-serif;font-weight:normal;color:#3a3a3a;transform:scaleX(0.8200);transform-origin:0 0;">110m</div>
<div class="t" style="left:342.88px;top:756.00px;font-size:10.1px;font-family:'Liberation Sans',sans-serif;font-weight:normal;color:#3a3a3a;transform:scaleX(0.8200);transform-origin:0 0;">120m</div>
<div class="t" style="left:390.97px;top:756.00px;font-size:10.1px;font-family:'Liberation Sans',sans-serif;font-weight:normal;color:#3a3a3a;transform:scaleX(0.8200);transform-origin:0 0;">130m</div>
<div class="t" style="left:439.06px;top:756.00px;font-size:10.1px;font-family:'Liberation Sans',sans-serif;font-weight:normal;color:#3a3a3a;transform:scaleX(0.8200);transform-origin:0 0;">140m</div>
<div class="t" style="left:487.15px;top:756.00px;font-size:10.1px;font-family:'Liberation Sans',sans-serif;font-weight:normal;color:#3a3a3a;transform:scaleX(0.8200);transform-origin:0 0;">150m</div>
<div class="t" style="left:535.24px;top:756.00px;font-size:10.1px;font-family:'Liberation Sans',sans-serif;font-weight:normal;color:#3a3a3a;transform:scaleX(0.8200);transform-origin:0 0;">160m</div>
<div class="t" style="left:583.33px;top:756.00px;font-size:10.1px;font-family:'Liberation Sans',sans-serif;font-weight:normal;color:#3a3a3a;transform:scaleX(0.8200);transform-origin:0 0;">170m</div>
<div class="t" style="left:321.30px;top:765.00px;font-size:8.4px;font-family:'Liberation Sans',sans-serif;font-weight:normal;color:#3a3a3a;transform:scaleX(0.9316);transform-origin:0 0;">Time (s)</div>
<div class="t" style="left:324.00px;top:72.00px;font-size:9.2px;font-family:'Liberation Serif',serif;font-weight:normal;color:#222;transform:scaleX(0.9340);transform-origin:0 0;">Scope</div>
<div class="t" style="left:6.3500000000000005px;top:459.7px;font-size:9px;color:#3a3a3a;transform:rotate(-90deg) scaleX(0.9085);transform-origin:0 0">Instantaneous Level (s)</div>
<div class="t" style="left:672.78px;top:81.00px;font-size:10.1px;font-family:'Liberation Sans',sans-serif;font-weight:normal;color:#3a3a3a;transform:scaleX(0.8200);transform-origin:0 0;">10u</div>
<div class="t" style="left:677.39px;top:107.00px;font-size:10.1px;font-family:'Liberation Sans',sans-serif;font-weight:normal;color:#3a3a3a;transform:scaleX(0.8200);transform-origin:0 0;">5u</div>
<div class="t" style="left:677.39px;top:125.00px;font-size:10.1px;font-family:'Liberation Sans',sans-serif;font-weight:normal;color:#3a3a3a;transform:scaleX(0.8200);transform-origin:0 0;">3u</div>
<div class="t" style="left:677.39px;top:140.00px;font-size:10.1px;font-family:'Liberation Sans',sans-serif;font-weight:normal;color:#3a3a3a;transform:scaleX(0.8200);transform-origin:0 0;">2u</div>
<div class="t" style="left:677.39px;top:165.00px;font-size:10.1px;font-family:'Liberation Sans',sans-serif;font-weight:normal;color:#3a3a3a;transform:scaleX(0.8200);transform-origin:0 0;">1u</div>
<div class="t" style="left:668.18px;top:191.00px;font-size:10.1px;font-family:'Liberation Sans',sans-serif;font-weight:normal;color:#3a3a3a;transform:scaleX(0.8200);transform-origin:0 0;">500n</div>
<div class="t" style="left:668.18px;top:209.00px;font-size:10.1px;font-family:'Liberation Sans',sans-serif;font-weight:normal;color:#3a3a3a;transform:scaleX(0.8200);transform-origin:0 0;">300n</div>
<div class="t" style="left:668.18px;top:224.00px;font-size:10.1px;font-family:'Liberation Sans',sans-serif;font-weight:normal;color:#3a3a3a;transform:scaleX(0.8200);transform-origin:0 0;">200n</div>
<div class="t" style="left:668.18px;top:249.00px;font-size:10.1px;font-family:'Liberation Sans',sans-serif;font-weight:normal;color:#3a3a3a;transform:scaleX(0.8200);transform-origin:0 0;">100n</div>
<div class="t" style="left:672.78px;top:275.00px;font-size:10.1px;font-family:'Liberation Sans',sans-serif;font-weight:normal;color:#3a3a3a;transform:scaleX(0.8200);transform-origin:0 0;">50n</div>
<div class="t" style="left:672.78px;top:293.00px;font-size:10.1px;font-family:'Liberation Sans',sans-serif;font-weight:normal;color:#3a3a3a;transform:scaleX(0.8200);transform-origin:0 0;">30n</div>
<div class="t" style="left:672.78px;top:308.00px;font-size:10.1px;font-family:'Liberation Sans',sans-serif;font-weight:normal;color:#3a3a3a;transform:scaleX(0.8200);transform-origin:0 0;">20n</div>
<div class="t" style="left:672.78px;top:333.00px;font-size:10.1px;font-family:'Liberation Sans',sans-serif;font-weight:normal;color:#3a3a3a;transform:scaleX(0.8200);transform-origin:0 0;">10n</div>
<div class="t" style="left:677.39px;top:359.00px;font-size:10.1px;font-family:'Liberation Sans',sans-serif;font-weight:normal;color:#3a3a3a;transform:scaleX(0.8200);transform-origin:0 0;">5n</div>
<div class="t" style="left:677.39px;top:377.00px;font-size:10.1px;font-family:'Liberation Sans',sans-serif;font-weight:normal;color:#3a3a3a;transform:scaleX(0.8200);transform-origin:0 0;">3n</div>
<div class="t" style="left:677.39px;top:392.00px;font-size:10.1px;font-family:'Liberation Sans',sans-serif;font-weight:normal;color:#3a3a3a;transform:scaleX(0.8200);transform-origin:0 0;">2n</div>
<div class="t" style="left:677.39px;top:417.00px;font-size:10.1px;font-family:'Liberation Sans',sans-serif;font-weight:normal;color:#3a3a3a;transform:scaleX(0.8200);transform-origin:0 0;">1n</div>
<div class="t" style="left:668.18px;top:443.00px;font-size:10.1px;font-family:'Liberation Sans',sans-serif;font-weight:normal;color:#3a3a3a;transform:scaleX(0.8200);transform-origin:0 0;">500p</div>
<div class="t" style="left:668.18px;top:461.00px;font-size:10.1px;font-family:'Liberation Sans',sans-serif;font-weight:normal;color:#3a3a3a;transform:scaleX(0.8200);transform-origin:0 0;">300p</div>
<div class="t" style="left:668.18px;top:476.00px;font-size:10.1px;font-family:'Liberation Sans',sans-serif;font-weight:normal;color:#3a3a3a;transform:scaleX(0.8200);transform-origin:0 0;">200p</div>
<div class="t" style="left:668.18px;top:501.00px;font-size:10.1px;font-family:'Liberation Sans',sans-serif;font-weight:normal;color:#3a3a3a;transform:scaleX(0.8200);transform-origin:0 0;">100p</div>
<div class="t" style="left:672.78px;top:527.00px;font-size:10.1px;font-family:'Liberation Sans',sans-serif;font-weight:normal;color:#3a3a3a;transform:scaleX(0.8200);transform-origin:0 0;">50p</div>
<div class="t" style="left:672.78px;top:545.00px;font-size:10.1px;font-family:'Liberation Sans',sans-serif;font-weight:normal;color:#3a3a3a;transform:scaleX(0.8200);transform-origin:0 0;">30p</div>
<div class="t" style="left:672.78px;top:560.00px;font-size:10.1px;font-family:'Liberation Sans',sans-serif;font-weight:normal;color:#3a3a3a;transform:scaleX(0.8200);transform-origin:0 0;">20p</div>
<div class="t" style="left:672.78px;top:585.00px;font-size:10.1px;font-family:'Liberation Sans',sans-serif;font-weight:normal;color:#3a3a3a;transform:scaleX(0.8200);transform-origin:0 0;">10p</div>
<div class="t" style="left:677.39px;top:611.00px;font-size:10.1px;font-family:'Liberation Sans',sans-serif;font-weight:normal;color:#3a3a3a;transform:scaleX(0.8200);transform-origin:0 0;">5p</div>
<div class="t" style="left:677.39px;top:629.00px;font-size:10.1px;font-family:'Liberation Sans',sans-serif;font-weight:normal;color:#3a3a3a;transform:scaleX(0.8200);transform-origin:0 0;">3p</div>
<div class="t" style="left:677.39px;top:644.00px;font-size:10.1px;font-family:'Liberation Sans',sans-serif;font-weight:normal;color:#3a3a3a;transform:scaleX(0.8200);transform-origin:0 0;">2p</div>
<div class="t" style="left:677.39px;top:669.00px;font-size:10.1px;font-family:'Liberation Sans',sans-serif;font-weight:normal;color:#3a3a3a;transform:scaleX(0.8200);transform-origin:0 0;">1p</div>
<div class="t" style="left:665.42px;top:695.00px;font-size:10.1px;font-family:'Liberation Sans',sans-serif;font-weight:normal;color:#3a3a3a;transform:scaleX(0.8200);transform-origin:0 0;">5e-13</div>
<div class="t" style="left:665.42px;top:713.00px;font-size:10.1px;font-family:'Liberation Sans',sans-serif;font-weight:normal;color:#3a3a3a;transform:scaleX(0.8200);transform-origin:0 0;">3e-13</div>
<div class="t" style="left:665.42px;top:728.00px;font-size:10.1px;font-family:'Liberation Sans',sans-serif;font-weight:normal;color:#3a3a3a;transform:scaleX(0.8200);transform-origin:0 0;">2e-13</div>
<div class="t" style="left:685.19px;top:756.00px;font-size:10.1px;font-family:'Liberation Sans',sans-serif;font-weight:normal;color:#3a3a3a;transform:scaleX(0.8200);transform-origin:0 0;">20</div>
<div class="t" style="left:719.71px;top:756.00px;font-size:10.1px;font-family:'Liberation Sans',sans-serif;font-weight:normal;color:#3a3a3a;transform:scaleX(0.8200);transform-origin:0 0;">30</div>
<div class="t" style="left:763.19px;top:756.00px;font-size:10.1px;font-family:'Liberation Sans',sans-serif;font-weight:normal;color:#3a3a3a;transform:scaleX(0.8200);transform-origin:0 0;">50</div>
<div class="t" style="left:819.89px;top:756.00px;font-size:10.1px;font-family:'Liberation Sans',sans-serif;font-weight:normal;color:#3a3a3a;transform:scaleX(0.8200);transform-origin:0 0;">100</div>
<div class="t" style="left:878.89px;top:756.00px;font-size:10.1px;font-family:'Liberation Sans',sans-serif;font-weight:normal;color:#3a3a3a;transform:scaleX(0.8200);transform-origin:0 0;">200</div>
<div class="t" style="left:913.40px;top:756.00px;font-size:10.1px;font-family:'Liberation Sans',sans-serif;font-weight:normal;color:#3a3a3a;transform:scaleX(0.8200);transform-origin:0 0;">300</div>
<div class="t" style="left:956.89px;top:756.00px;font-size:10.1px;font-family:'Liberation Sans',sans-serif;font-weight:normal;color:#3a3a3a;transform:scaleX(0.8200);transform-origin:0 0;">500</div>
<div class="t" style="left:1018.42px;top:756.00px;font-size:10.1px;font-family:'Liberation Sans',sans-serif;font-weight:normal;color:#3a3a3a;transform:scaleX(0.8200);transform-origin:0 0;">1k</div>
<div class="t" style="left:1077.43px;top:756.00px;font-size:10.1px;font-family:'Liberation Sans',sans-serif;font-weight:normal;color:#3a3a3a;transform:scaleX(0.8200);transform-origin:0 0;">2k</div>
<div class="t" style="left:1111.94px;top:756.00px;font-size:10.1px;font-family:'Liberation Sans',sans-serif;font-weight:normal;color:#3a3a3a;transform:scaleX(0.8200);transform-origin:0 0;">3k</div>
<div class="t" style="left:1155.42px;top:756.00px;font-size:10.1px;font-family:'Liberation Sans',sans-serif;font-weight:normal;color:#3a3a3a;transform:scaleX(0.8200);transform-origin:0 0;">5k</div>
<div class="t" style="left:1212.12px;top:756.00px;font-size:10.1px;font-family:'Liberation Sans',sans-serif;font-weight:normal;color:#3a3a3a;transform:scaleX(0.8200);transform-origin:0 0;">10k</div>
<div class="t" style="left:1271.12px;top:756.00px;font-size:10.1px;font-family:'Liberation Sans',sans-serif;font-weight:normal;color:#3a3a3a;transform:scaleX(0.8200);transform-origin:0 0;">20k</div>
<div class="t" style="left:955.20px;top:765.00px;font-size:8.4px;font-family:'Liberation Sans',sans-serif;font-weight:normal;color:#3a3a3a;transform:scaleX(0.9640);transform-origin:0 0;">Frequency (Hz)</div>
<div class="t" style="left:976.75px;top:72.00px;font-size:9.2px;font-family:'Liberation Serif',serif;font-weight:bold;color:#222;transform:scaleX(0.7194);transform-origin:0 0;">FFT</div>
<div class="t" style="left:654.35px;top:432.0px;font-size:9px;color:#3a3a3a;transform:rotate(-90deg) scaleX(0.8693);transform-origin:0 0">Level (s)</div>
<div class="a" style="left:0px;top:783px;width:1298px;height:2px;background:#dfe3e4"></div>
<div class="a" style="left:0px;top:785px;width:1298px;height:16px;background:#d3d3d3"></div>
<div class="a" style="left:0px;top:801px;width:1298px;height:1px;background:#a9a9a9"></div>
<svg class="a" style="left:3px;top:786px" width="11" height="11" viewBox="0 0 11 11"><rect width="11" height="11" fill="#2d4250"/><path d="M5.5 1.5v8M1.5 5.5h8" stroke="#fff" stroke-width="1.6"/></svg>
<div class="t" style="left:16.20px;top:788.00px;font-size:10px;font-family:'Liberation Sans',sans-serif;font-weight:normal;color:#222;transform:scaleX(0.9602);transform-origin:0 0;">Add Meter</div>
<svg class="a" style="left:65px;top:791px" width="5" height="3"><path d="M0 0h4.5l-2.25 2.5z" fill="#333"/></svg>
<div class="a" style="left:74px;top:786px;width:1px;height:13px;background:#c2c2c2"></div>
<svg class="a" style="left:78px;top:786px" width="11" height="12" viewBox="0 0 11 12"><rect width="11" height="11.5" fill="#2d4250"/><rect x="1.5" y="1.5" width="5.5" height="8.5" fill="#e8eef0"/><path d="M2.5 3.5h3.5M2.5 5.5h3M2.5 7.5h3" stroke="#2d4250" stroke-width="0.8"/><path d="M5.5 6.5h3.2M7.6 4.6l2 1.9-2 1.9" stroke="#fff" stroke-width="1.3" fill="none"/></svg>
<div class="t" style="left:91.70px;top:788.00px;font-size:10px;font-family:'Liberation Sans',sans-serif;font-weight:normal;color:#222;transform:scaleX(0.9022);transform-origin:0 0;">Save Meter Data</div>
<div class="a" style="left:166px;top:786px;width:1px;height:13px;background:#c2c2c2"></div>
<svg class="a" style="left:171px;top:786px" width="11" height="11" viewBox="0 0 11 11"><rect width="11" height="11" fill="#b9b9b9"/><path d="M3.5 2.5v6l5-3z" fill="#eee"/></svg>
<div class="t" style="left:184.60px;top:788.00px;font-size:10px;font-family:'Liberation Sans',sans-serif;font-weight:normal;color:#999;transform:scaleX(0.8843);transform-origin:0 0;">Regulate</div>
<svg class="a" style="left:1285px;top:788px" width="10" height="9" viewBox="0 0 10 9"><path d="M5 0.3L7.2 2.5 5 4.7 2.8 2.5z" fill="#34495a"/><path d="M0.5 7.2h9" stroke="#34495a" stroke-width="1.4"/></svg>
<div class="a" style="left:3px;top:802px;width:1294px;height:1px;background:#a9a9a9"></div>
<div class="a" style="left:3px;top:802px;width:636px;height:19px;background:#d9e3e6"></div>
<div class="a" style="left:3px;top:821px;width:636px;height:1px;background:#c4ced1"></div>
<div class="a" style="left:3px;top:822px;width:636px;height:93px;background:#d9e3e6"></div>
<div class="t" style="left:7.00px;top:807.00px;font-size:11px;font-family:'Liberation Sans',sans-serif;font-weight:bold;color:#111;transform:scaleX(0.9689);transform-origin:0 0;">RMS Level</div>
<div class="a" style="left:66px;top:803px;width:54px;height:18px;background:#fff"></div>
<div class="t" style="left:69.00px;top:809.00px;font-size:9px;font-family:'Liberation Sans',sans-serif;font-weight:normal;color:#333;">s</div>
<svg class="a" style="left:113px;top:811px" width="5" height="3"><path d="M0 0h4.5l-2.25 2.5z" fill="#222"/></svg>
<svg class="a" style="left:122px;top:806px" width="17" height="12" viewBox="0 0 17 12"><rect x="0" y="0" width="11" height="11.5" fill="#2d4250"/><rect x="1.4" y="2.2" width="8.2" height="6.6" fill="#e6eeef"/><path d="M1.4 3l4.1 3.3L9.6 3M1.4 7.2l4.1-3 4.1 3" stroke="#5d6e7c" stroke-width="1" fill="none"/><rect x="1.4" y="6.8" width="8.2" height="0.9" fill="#6a7a86"/><path d="M12.3 5h3.6l-1.8 2z" fill="#222"/></svg>
<svg class="a" style="left:143px;top:806px" width="11.3" height="11.3" viewBox="0 0 12 12"><rect width="12" height="12" fill="#2d4250"/><g fill="#fff"><circle cx="6" cy="6" r="3.0"/><rect x="5.15" y="1.6" width="1.7" height="1.8" transform="rotate(0 6 6)"/><rect x="5.15" y="1.6" width="1.7" height="1.8" transform="rotate(45 6 6)"/><rect x="5.15" y="1.6" width="1.7" height="1.8" transform="rotate(90 6 6)"/><rect x="5.15" y="1.6" width="1.7" height="1.8" transform="rotate(135 6 6)"/><rect x="5.15" y="1.6" width="1.7" height="1.8" transform="rotate(180 6 6)"/><rect x="5.15" y="1.6" width="1.7" height="1.8" transform="rotate(225 6 6)"/><rect x="5.15" y="1.6" width="1.7" height="1.8" transform="rotate(270 6 6)"/><rect x="5.15" y="1.6" width="1.7" height="1.8" transform="rotate(315 6 6)"/></g><circle cx="6" cy="6" r="1.45" fill="#2d4250"/></svg>
<div class="a" style="left:603px;top:805px;width:1px;height:13px;background:#c4ced1"></div>
<svg class="a" style="left:609px;top:807px" width="10" height="10" viewBox="0 0 10 10"><path d="M4 1.2H1.2v7.6h7.6V6" stroke="#21426f" stroke-width="1.6" fill="none"/><path d="M4.5 5.5L8.5 1.5M5.5 1h3.5v3.5" stroke="#21426f" stroke-width="1.5" fill="none"/></svg>
<svg class="a" style="left:626px;top:808px" width="9" height="9" viewBox="0 0 9 9"><path d="M1 1l7 7M8 1l-7 7" stroke="#222" stroke-width="1.4"/></svg>
<div class="t" style="left:9.00px;top:859.00px;font-size:23px;font-family:'Liberation Sans',sans-serif;font-weight:normal;color:#303030;transform:scaleX(0.9771);transform-origin:0 0;">Jitter</div>
<svg class="a" style="left:155px;top:866px" width="9" height="7" viewBox="0 0 9 7"><path d="M0 0h8.5L4.25 6.5z" fill="#111"/></svg>
<div class="a" style="left:165px;top:824px;width:468px;height:76px;background:#000"></div>
<div class="t" style="left:491.70px;top:852.00px;font-size:24px;font-family:'Liberation Sans',sans-serif;font-weight:normal;color:#33e033;transform:scaleX(0.8758);transform-origin:0 0;">0.939</div>
<div class="t" style="left:607.00px;top:852.00px;font-size:24px;font-family:'Liberation Sans',sans-serif;font-weight:normal;color:#33e033;transform:scaleX(0.8403);transform-origin:0 0;">ns</div>
<div class="a" style="left:165px;top:900px;width:468px;height:14px;background:#000"></div>
<div class="a" style="left:165px;top:900px;width:468px;height:1px;background:#a3a3a3"></div>
<div class="a" style="left:166px;top:901px;width:466px;height:4px;background:#878787"></div>
<div class="a" style="left:166px;top:907px;width:466px;height:5px;background:#878787"></div>
<div class="a" style="left:165px;top:912px;width:468px;height:1px;background:#a3a3a3"></div>
<div class="a" style="left:3px;top:915px;width:636px;height:4px;background:#a6a6a6"></div>
<div class="a" style="left:3px;top:919px;width:636px;height:2px;background:#e2e5e5"></div>
<div class="a" style="left:639px;top:802px;width:4px;height:118px;background:#adadad"></div>
<div class="a" style="left:643px;top:802px;width:636px;height:19px;background:#d9e3e6"></div>
<div class="a" style="left:643px;top:821px;width:636px;height:1px;background:#c4ced1"></div>
<div class="a" style="left:643px;top:822px;width:636px;height:93px;background:#d9e3e6"></div>
<div class="t" style="left:647.00px;top:807.00px;font-size:11px;font-family:'Liberation Sans',sans-serif;font-weight:bold;color:#111;transform:scaleX(1.0101);transform-origin:0 0;">Average Jitter Level</div>
<div class="a" style="left:757px;top:803px;width:54px;height:18px;background:#fff"></div>
<div class="t" style="left:760.00px;top:809.00px;font-size:9px;font-family:'Liberation Sans',sans-serif;font-weight:normal;color:#333;">s</div>
<svg class="a" style="left:804px;top:811px" width="5" height="3"><path d="M0 0h4.5l-2.25 2.5z" fill="#222"/></svg>
<svg class="a" style="left:813px;top:806px" width="17" height="12" viewBox="0 0 17 12"><rect x="0" y="0" width="11" height="11.5" fill="#2d4250"/><rect x="1.4" y="2.2" width="8.2" height="6.6" fill="#e6eeef"/><path d="M1.4 3l4.1 3.3L9.6 3M1.4 7.2l4.1-3 4.1 3" stroke="#5d6e7c" stroke-width="1" fill="none"/><rect x="1.4" y="6.8" width="8.2" height="0.9" fill="#6a7a86"/><path d="M12.3 5h3.6l-1.8 2z" fill="#222"/></svg>
<svg class="a" style="left:834px;top:806px" width="11.3" height="11.3" viewBox="0 0 12 12"><rect width="12" height="12" fill="#2d4250"/><g fill="#fff"><circle cx="6" cy="6" r="3.0"/><rect x="5.15" y="1.6" width="1.7" height="1.8" transform="rotate(0 6 6)"/><rect x="5.15" y="1.6" width="1.7" height="1.8" transform="rotate(45 6 6)"/><rect x="5.15" y="1.6" width="1.7" height="1.8" transform="rotate(90 6 6)"/><rect x="5.15" y="1.6" width="1.7" height="1.8" transform="rotate(135 6 6)"/><rect x="5.15" y="1.6" width="1.7" height="1.8" transform="rotate(180 6 6)"/><rect x="5.15" y="1.6" width="1.7" height="1.8" transform="rotate(225 6 6)"/><rect x="5.15" y="1.6" width="1.7" height="1.8" transform="rotate(270 6 6)"/><rect x="5.15" y="1.6" width="1.7" height="1.8" transform="rotate(315 6 6)"/></g><circle cx="6" cy="6" r="1.45" fill="#2d4250"/></svg>
<div class="a" style="left:1243px;top:805px;width:1px;height:13px;background:#c4ced1"></div>
<svg class="a" style="left:1249px;top:807px" width="10" height="10" viewBox="0 0 10 10"><path d="M4 1.2H1.2v7.6h7.6V6" stroke="#21426f" stroke-width="1.6" fill="none"/><path d="M4.5 5.5L8.5 1.5M5.5 1h3.5v3.5" stroke="#21426f" stroke-width="1.5" fill="none"/></svg>
<svg class="a" style="left:1266px;top:808px" width="9" height="9" viewBox="0 0 9 9"><path d="M1 1l7 7M8 1l-7 7" stroke="#222" stroke-width="1.4"/></svg>
<div class="t" style="left:649.00px;top:859.00px;font-size:23px;font-family:'Liberation Sans',sans-serif;font-weight:normal;color:#303030;transform:scaleX(0.9771);transform-origin:0 0;">Jitter</div>
<svg class="a" style="left:795px;top:866px" width="9" height="7" viewBox="0 0 9 7"><path d="M0 0h8.5L4.25 6.5z" fill="#111"/></svg>
<div class="a" style="left:805px;top:824px;width:468px;height:76px;background:#000"></div>
<div class="t" style="left:1130.30px;top:852.00px;font-size:24px;font-family:'Liberation Sans',sans-serif;font-weight:normal;color:#33e033;transform:scaleX(0.8708);transform-origin:0 0;">840.9</div>
<div class="t" style="left:1245.60px;top:852.00px;font-size:24px;font-family:'Liberation Sans',sans-serif;font-weight:normal;color:#33e033;transform:scaleX(0.8600);transform-origin:0 0;">ps</div>
<div class="a" style="left:805px;top:900px;width:468px;height:14px;background:#000"></div>
<div class="a" style="left:805px;top:900px;width:468px;height:1px;background:#a3a3a3"></div>
<div class="a" style="left:806px;top:901px;width:466px;height:4px;background:#878787"></div>
<div class="a" style="left:806px;top:907px;width:466px;height:5px;background:#878787"></div>
<div class="a" style="left:805px;top:912px;width:468px;height:1px;background:#a3a3a3"></div>
<div class="a" style="left:805px;top:900px;width:329px;height:1px;background:#6ee86e"></div>
<div class="a" style="left:806px;top:901px;width:328px;height:4px;background:#0af00a"></div>
<div class="a" style="left:806px;top:907px;width:328px;height:5px;background:#0af00a"></div>
<div class="a" style="left:805px;top:912px;width:329px;height:1px;background:#6ee86e"></div>
<div class="a" style="left:643px;top:915px;width:636px;height:4px;background:#a6a6a6"></div>
<div class="a" style="left:643px;top:919px;width:636px;height:2px;background:#e2e5e5"></div>
<div class="a" style="left:1279px;top:802px;width:7px;height:118px;background:#adadad"></div>
<div class="a" style="left:1286px;top:802px;width:12px;height:119px;background:#f0f0f0"></div>
<div class="a" style="left:1286px;top:802px;width:1px;height:119px;background:#fafafa"></div>
<div class="a" style="left:1298px;top:783px;width:2px;height:138px;background:#3f6d7b"></div>
<svg class="a" style="left:1288px;top:806px" width="8" height="5" viewBox="0 0 8 5"><path d="M0.5 4.5L4 1l3.5 3.5" stroke="#333" stroke-width="1" fill="none"/></svg>
<div class="a" style="left:1287px;top:813px;width:10px;height:33px;background:#cdcdcd"></div>
<svg class="a" style="left:1288px;top:912px" width="8" height="5" viewBox="0 0 8 5"><path d="M0.5 0.5L4 4l3.5-3.5" stroke="#333" stroke-width="1" fill="none"/></svg>
<div class="a" style="left:83px;top:918px;width:53px;height:2px;background:#fff"></div>
<div class="a" style="left:0px;top:921px;width:1300px;height:17px;background:#efefef"></div>
<div class="t" style="left:632.80px;top:924.00px;font-size:9.8px;font-family:'Liberation Sans',sans-serif;font-weight:normal;color:#333;transform:scaleX(0.9489);transform-origin:0 0;">Output:</div>
<div class="a" style="left:668.5px;top:923px;width:108.5px;height:12.3px;background:#000"></div>
<div class="t" style="left:670.50px;top:924.00px;font-size:9.8px;font-family:'Liberation Sans',sans-serif;font-weight:normal;color:#2ec42e;transform:scaleX(0.8992);transform-origin:0 0;">ASIO: ASIO4ALL v2 2 Chs</div>
<div class="a" style="left:779px;top:923px;width:56px;height:12.3px;background:#000"></div>
<div class="t" style="left:781.70px;top:924.00px;font-size:9.8px;font-family:'Liberation Sans',sans-serif;font-weight:normal;color:#2ec42e;transform:scaleX(0.9087);transform-origin:0 0;">48.0000 kHz</div>
<div class="t" style="left:840.00px;top:924.00px;font-size:9.8px;font-family:'Liberation Sans',sans-serif;font-weight:normal;color:#333;transform:scaleX(0.9380);transform-origin:0 0;">Input:</div>
<div class="a" style="left:868.5px;top:923px;width:117.2px;height:12.3px;background:#000"></div>
<div class="t" style="left:870.80px;top:924.00px;font-size:9.8px;font-family:'Liberation Sans',sans-serif;font-weight:normal;color:#2ec42e;transform:scaleX(0.9475);transform-origin:0 0;">Digital Unbalanced 75 ohm</div>
<div class="a" style="left:987.7px;top:923px;width:26px;height:12.3px;background:#000"></div>
<div class="t" style="left:990.00px;top:924.00px;font-size:9.8px;font-family:'Liberation Sans',sans-serif;font-weight:normal;color:#2ec42e;transform:scaleX(0.9418);transform-origin:0 0;">Jitter</div>
<div class="a" style="left:1015.4px;top:923px;width:56px;height:12.3px;background:#000"></div>
<div class="t" style="left:1017.70px;top:924.00px;font-size:9.8px;font-family:'Liberation Sans',sans-serif;font-weight:normal;color:#2ec42e;transform:scaleX(0.9232);transform-origin:0 0;">48.0000 kHz</div>
<div class="a" style="left:1073.8px;top:923px;width:105.2px;height:12.3px;background:#000"></div>
<div class="t" style="left:1076.50px;top:924.00px;font-size:9.8px;font-family:'Liberation Sans',sans-serif;font-weight:normal;color:#2ec42e;transform:scaleX(0.9044);transform-origin:0 0;">700 Hz (AES3) - 100 kHz</div>
<div class="t" style="left:1184.20px;top:924.00px;font-size:9.8px;font-family:'Liberation Sans',sans-serif;font-weight:normal;color:#333;transform:scaleX(0.9104);transform-origin:0 0;">Ref/Sync Input:</div>
<div class="a" style="left:1251px;top:923px;width:35px;height:12.3px;background:#000"></div>
<div class="t" style="left:1253.30px;top:924.00px;font-size:9.8px;font-family:'Liberation Sans',sans-serif;font-weight:normal;color:#2ec42e;transform:scaleX(0.9335);transform-origin:0 0;">Locked</div>
<div class="a" style="left:563px;top:936px;width:34px;height:2px;background:#f0b080"></div>
<div class="a" style="left:597px;top:936px;width:5px;height:2px;background:#a8d8a8"></div>
</body></html>
